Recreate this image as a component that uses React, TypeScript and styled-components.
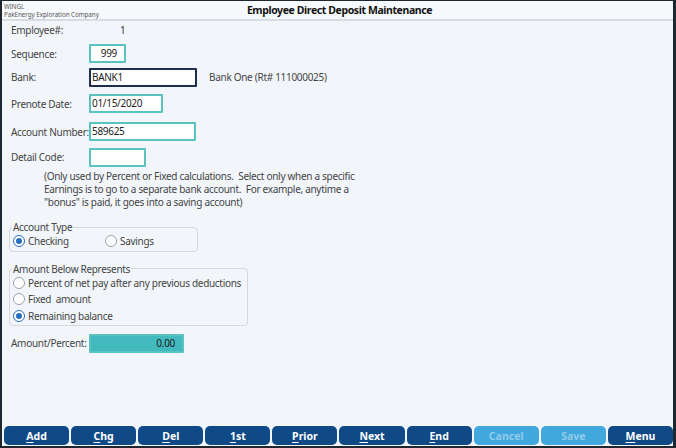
import React from "react";
import styled, { createGlobalStyle } from "styled-components";

const GlobalStyle = createGlobalStyle`
  html, body { margin: 0; padding: 0; }
  body {
    width: 676px;
    height: 448px;
    overflow: hidden;
    font-family: "Noto Sans", "Open Sans", sans-serif;
    letter-spacing: -0.3px;
    color: #333;
  }
`;

const Frame = styled.div`
  box-sizing: border-box;
  width: 676px;
  height: 448px;
  border-style: solid;
  border-color: #1e2630;
  border-width: 1px 3px 2px 2px;
  background: #f2f6fb;
  display: flex;
  flex-direction: column;
`;

const Header = styled.div`
  height: 18px;
  background: #f6f9fb;
  border-bottom: 2px solid #d6dce2;
  display: grid;
  grid-template-columns: 1fr auto 1fr;
  align-items: center;
`;

const Company = styled.div`
  font-size: 6.2px;
  letter-spacing: 0;
  line-height: 8px;
  color: #555;
  padding-left: 2px;
  padding-top: 1px;
`;

const Title = styled.div`
  font-size: 10.5px;
  font-weight: bold;
  letter-spacing: -0.4px;
  color: #111;
  padding-left: 4px;
`;

const Body = styled.div`
  flex: 1;
  padding: 0 0 0 9px;
  display: flex;
  flex-direction: column;
`;

const Row = styled.div<{ $h: number; $top?: number }>`
  height: ${(p) => p.$h}px;
  display: flex;
  align-items: ${(p) => (p.$top !== undefined ? "flex-start" : "center")};
  padding-top: ${(p) => p.$top ?? 0}px;
  box-sizing: border-box;
  font-size: 10px;
  white-space: nowrap;
`;

const Label = styled.div`
  width: 78px;
  flex: none;
  color: #444;
`;

const Value = styled.div`
  padding-left: 31px;
`;

const Input = styled.div<{ $w: number; $focus?: boolean; $right?: boolean; $fill?: boolean }>`
  box-sizing: border-box;
  width: ${(p) => p.$w}px;
  height: 19px;
  border: ${(p) => (p.$focus ? "2px solid #1c2f4f" : "2px solid #58c3c0")};
  background: ${(p) => (p.$fill ? "#41b9bd" : "#fff")};
  border-radius: 1px;
  font-size: 10px;
  line-height: 15px;
  padding: 0 7px 0 1px;
  text-align: ${(p) => (p.$right ? "right" : "left")};
  color: #222;
`;

const Aside = styled.div`
  margin-left: 12px;
  color: #444;
`;

const Note = styled.div`
  padding-left: 33px;
  margin-top: 1px;
  font-size: 10px;
  line-height: 13px;
  color: #444;
  white-space: pre;
`;

const Group = styled.fieldset<{ $w: number; $gap: number }>`
  box-sizing: border-box;
  width: ${(p) => p.$w}px;
  margin: ${(p) => p.$gap}px 0 0 -2px;
  padding: 0 0 1px 3px;
  border: 1px solid #d4d9de;
  border-radius: 4px;
  font-size: 10px;
  color: #444;
  white-space: nowrap;
`;

const Legend = styled.legend`
  padding: 0 1px;
  margin-left: -1px;
  font-size: 10px;
  line-height: 12px;
`;

const Options = styled.div<{ $row?: boolean }>`
  display: flex;
  flex-direction: ${(p) => (p.$row ? "row" : "column")};
`;

const Option = styled.div<{ $w?: number }>`
  height: 16.5px;
  width: ${(p) => (p.$w ? `${p.$w}px` : "auto")};
  display: flex;
  align-items: center;
  gap: 3px;
`;

const Dot = styled.span<{ $on?: boolean }>`
  box-sizing: border-box;
  width: 12px;
  height: 12px;
  border-radius: 50%;
  border: 1px solid ${(p) => (p.$on ? "#2a6fc0" : "#9aa2aa")};
  background: #fff;
  display: flex;
  align-items: center;
  justify-content: center;
  &::after {
    content: "";
    width: 6px;
    height: 6px;
    border-radius: 50%;
    background: ${(p) => (p.$on ? "#2a6fc0" : "transparent")};
  }
`;

const Bar = styled.div`
  display: flex;
  gap: 2px;
  padding: 0 0 0 2px;
  height: 19px;
`;

const Btn = styled.div<{ $off?: boolean }>`
  flex: 1;
  border-radius: 5px;
  background: ${(p) => (p.$off ? "#41a8de" : "#0f4a86")};
  color: ${(p) => (p.$off ? "#8fcbea" : "#fff")};
  font-size: 10.5px;
  font-weight: bold;
  letter-spacing: 0;
  display: flex;
  align-items: center;
  justify-content: center;
  u { text-underline-offset: 2px; }
`;

const buttons: { k: string; rest: string; off?: boolean }[] = [
  { k: "A", rest: "dd" },
  { k: "C", rest: "hg" },
  { k: "D", rest: "el" },
  { k: "1", rest: "st" },
  { k: "P", rest: "rior" },
  { k: "N", rest: "ext" },
  { k: "E", rest: "nd" },
  { k: "", rest: "Cancel", off: true },
  { k: "", rest: "Save", off: true },
  { k: "M", rest: "enu" },
];

export default function App() {
  return (
    <Frame>
      <GlobalStyle />
      <Header>
        <Company>
          WINGL
          <br />
          PakEnergy Exploration Company
        </Company>
        <Title>Employee Direct Deposit Maintenance</Title>
        <div />
      </Header>
      <Body>
        <Row $h={21} $top={2}>
          <Label>Employee#:</Label>
          <Value>1</Value>
        </Row>
        <Row $h={23}>
          <Label>Sequence:</Label>
          <Input $w={37} $right>999</Input>
        </Row>
        <Row $h={24}>
          <Label>Bank:</Label>
          <Input $w={108} $focus>BANK1</Input>
          <Aside>Bank One (Rt# 111000025)</Aside>
        </Row>
        <Row $h={29}>
          <Label>Prenote Date:</Label>
          <Input $w={74}>01/15/2020</Input>
        </Row>
        <Row $h={27}>
          <Label>Account Number:</Label>
          <Input $w={107}>589625</Input>
        </Row>
        <Row $h={24}>
          <Label>Detail Code:</Label>
          <Input $w={57} />
        </Row>
        <Note>
          {"(Only used by Percent or Fixed calculations.  Select only when a specific\nEarnings is to go to a separate bank account.  For example, anytime a\n\"bonus\" is paid, it goes into a saving account)"}
        </Note>
        <Group $w={189} $gap={12}>
          <Legend>Account Type</Legend>
          <Options $row>
            <Option $w={92}>
              <Dot $on />
              Checking
            </Option>
            <Option>
              <Dot />
              Savings
            </Option>
          </Options>
        </Group>
        <Group $w={239} $gap={11}>
          <Legend>Amount Below Represents</Legend>
          <Options>
            <Option>
              <Dot />
              Percent of net pay after any previous deductions
            </Option>
            <Option>
              <Dot />
              Fixed&nbsp; amount
            </Option>
            <Option>
              <Dot $on />
              Remaining balance
            </Option>
          </Options>
        </Group>
        <Row $h={34}>
          <Label>Amount/Percent:</Label>
          <Input $w={95} $right $fill>0.00</Input>
        </Row>
      </Body>
      <Bar>
        {buttons.map((b) => (
          <Btn key={b.rest} $off={b.off}>
            {b.k && <u>{b.k}</u>}
            {b.rest}
          </Btn>
        ))}
      </Bar>
      <div style={{ height: 1 }} />
    </Frame>
  );
}
